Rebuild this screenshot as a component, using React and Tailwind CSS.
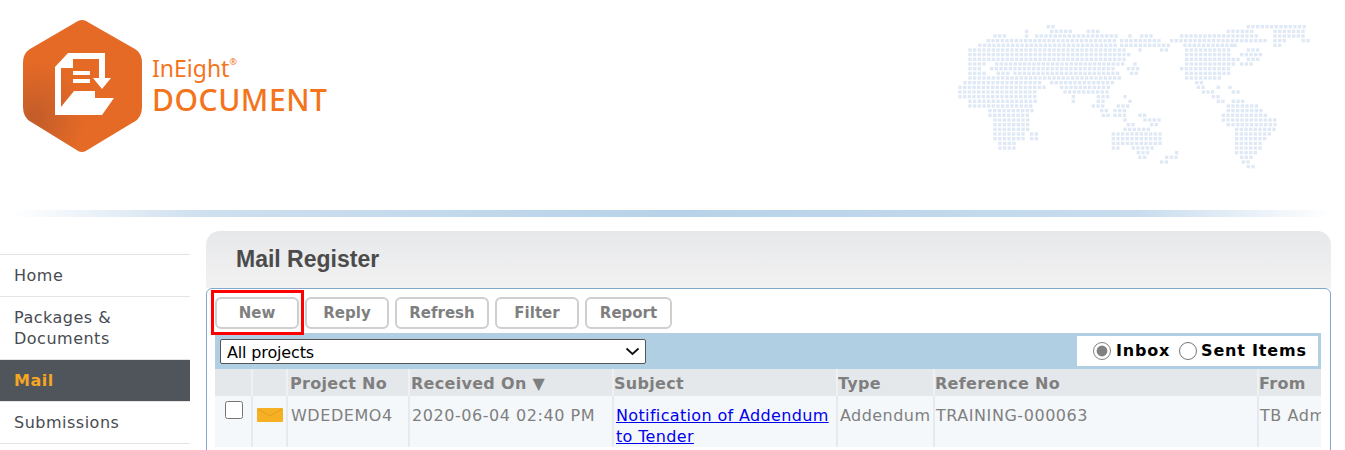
import React from 'react';

const verdana = { fontFamily: '"DejaVu Sans", Verdana, sans-serif' };

// dotted world map, runs are [from, to] in a 1335x690 space
const mapRows = [
  [75, [[440, 460], [1040, 1220]]],
  [89, [[375, 385], [450, 510], [560, 590], [980, 1060], [1120, 1205]]],
  [103, [[280, 320], [375, 385], [405, 650], [685, 695], [720, 755], [840, 1070], [1120, 1205]]],
  [117, [[260, 650], [660, 780], [810, 1090], [1120, 1155], [1205, 1220]]],
  [131, [[235, 650], [660, 800], [850, 990], [1000, 1010], [1120, 1140]]],
  [145, [[205, 680], [715, 725], [780, 800], [855, 990], [1040, 1080]]],
  [159, [[205, 690], [855, 990], [1020, 1080]]],
  [173, [[205, 680], [855, 1020], [1040, 1070]]],
  [187, [[205, 260], [285, 670], [700, 710], [855, 1000], [1020, 1060]]],
  [201, [[205, 240], [270, 640], [680, 710], [840, 990]]],
  [215, [[205, 250], [290, 320], [340, 660], [690, 710], [855, 990]]],
  [229, [[205, 660], [855, 955]]],
  [243, [[190, 420], [450, 640], [885, 910]]],
  [257, [[175, 440], [480, 630], [890, 910], [950, 960], [985, 995]]],
  [271, [[175, 410], [490, 620], [905, 940], [995, 1020]]],
  [285, [[175, 400], [515, 525], [590, 630], [670, 680], [935, 960]]],
  [299, [[205, 410], [515, 525], [590, 615], [685, 695], [950, 975], [995, 1035]]],
  [313, [[205, 395], [575, 615], [650, 680], [980, 1065]]],
  [327, [[265, 395], [600, 615], [640, 680], [980, 1080]]],
  [341, [[265, 390], [605, 630], [640, 680], [715, 740], [965, 1100]]],
  [355, [[280, 380], [670, 680], [730, 785], [965, 1130]]],
  [369, [[280, 390], [680, 700], [750, 770], [980, 1130]]],
  [383, [[280, 385], [670, 750], [1005, 1130]]],
  [397, [[280, 370], [390, 415], [635, 775], [1005, 1115]]],
  [411, [[280, 370], [390, 415], [635, 775], [1005, 1100]]],
  [425, [[295, 350], [635, 775], [1005, 1085]]],
  [439, [[295, 340], [635, 660], [695, 760], [1005, 1075]]],
  [453, [[710, 745], [825, 835], [1005, 1065]]],
  [467, [[715, 730], [795, 825], [1020, 1050]]],
  [481, [[780, 800], [1025, 1050]]],
  [495, [[1040, 1065]]],
];

const WorldMap = () => {
  const dots = [];
  mapRows.forEach(([y, runs]) => {
    runs.forEach(([from, to]) => {
      for (let x = from; x <= to; x += 14) {
        dots.push(<rect key={`${x}-${y}`} x={x} y={y} width="10" height="10" fill="#dfe9f5" />);
      }
    });
  });
  return (
    <svg width="445" height="210" viewBox="0 0 1335 630" className="flex-shrink-0">
      <defs>
        <filter id="soft"><feGaussianBlur stdDeviation="1.8" /></filter>
      </defs>
      <g filter="url(#soft)">{dots}</g>
    </svg>
  );
};

const Logo = () => (
  <div className="flex items-center">
    <svg width="124" height="136" viewBox="0 0 124 136" className="flex-shrink-0">
      <defs>
        <radialGradient id="hex" cx="0.03" cy="0.78" r="0.5">
          <stop offset="0" stopColor="#c25c2a" />
          <stop offset="1" stopColor="#e56a26" />
        </radialGradient>
      </defs>
      <path
        d="M62 11 L111 39 Q114 41 114 46 V90 Q114 96 110 98 L62 127 L15 98 Q11 96 11 90 V46 Q11 41 14 39 Z"
        fill="url(#hex)"
        stroke="url(#hex)"
        strokeWidth="16"
        strokeLinejoin="round"
      />
      {/* document, arrow and folder */}
      <g transform="translate(-20 -17)" fill="#fff">
        <path d="M55 115 V67 L68 53 H105 V78 H111 L102 89 L93 78 H99 V59 H73 V68 H61 V107 L74 91 H95 V98 H114 L102 115 Z" />
        <rect x="73" y="71" width="17" height="4" />
        <rect x="73" y="79" width="17" height="4" />
      </g>
    </svg>
    <div className="ml-[8px] text-[#f4741c]" style={{ fontFamily: '"Noto Sans", sans-serif' }}>
      <div className="flex h-[29px] items-start text-[23px] leading-[28px]">
        InEight<span className="text-[9px] leading-[16px]">®</span>
      </div>
      <div className="text-[30px] font-medium leading-[34px] tracking-[0.55px]">DOCUMENT</div>
    </div>
  </div>
);

const NavItem = ({ children, active }) => (
  <div
    className={`border-b border-[#e4e4e4] px-[14px] py-[10px] text-[16px] leading-[21px] tracking-[0.5px] ${
      active ? 'bg-[#50545b] font-bold tracking-[0.2px] text-[#f5a623]' : 'text-[#474b52]'
    }`}
  >
    {children}
  </div>
);

const ToolButton = ({ children, width }) => (
  <button
    className={`h-[32px] rounded-[6px] border-2 border-[#cfcfcf] bg-white text-[15px] font-bold text-[#7f7f7f] ${width}`}
  >
    {children}
  </button>
);

const headCell = 'border-r-2 border-[#eef0f2] pt-[3px] text-left text-[16px] font-bold tracking-[0.3px] text-[#7f7f7f] whitespace-nowrap overflow-hidden';
const bodyCell = 'border-r-2 border-[#e6eaee] pt-[9px] align-top text-[16px] leading-[21px] tracking-[0.55px] text-[#7f7f7f] whitespace-nowrap overflow-hidden';

const App = () => {
  return (
    <div className="h-[450px] w-[1345px] overflow-hidden bg-white" style={verdana}>
      {/* Header */}
      <div className="flex h-[210px] items-start justify-between pl-[20px] pt-[17px]">
        <Logo />
        <div className="mt-[-17px]">
          <WorldMap />
        </div>
      </div>
      <div className="mx-[12px] h-[7px] bg-[linear-gradient(to_right,transparent,#cfe0ef_14%,#b7d2e8_50%,#c8dcee_85%,transparent)]" />

      <div className="flex pt-[14px]">
        {/* Sidebar */}
        <div className="w-[190px] flex-shrink-0 pt-[23px]">
          <div className="border-t border-[#e4e4e4]">
            <NavItem>Home</NavItem>
            <NavItem>Packages &amp; Documents</NavItem>
            <NavItem active>Mail</NavItem>
            <NavItem>Submissions</NavItem>
          </div>
        </div>

        {/* Main panel */}
        <div className="ml-[16px] w-[1125px]">
          <div
            className="h-[57px] rounded-t-[14px] bg-gradient-to-b from-[#e7e8ea] to-[#f2f2f2] pl-[30px] pt-[13px] text-[23px] font-bold leading-[30px] text-[#4b4b4b]"
            style={{ fontFamily: '"Liberation Sans", Arial, sans-serif' }}
          >
            Mail Register
          </div>
          <div className="relative h-[200px] rounded-[6px] border border-[#7fa8cb] bg-white pl-[8px] pr-[9px] pt-[8px]">
            {/* Toolbar */}
            <div className="flex gap-[6px]">
              <ToolButton width="w-[84px]">New</ToolButton>
              <ToolButton width="w-[84px]">Reply</ToolButton>
              <ToolButton width="w-[94px]">Refresh</ToolButton>
              <ToolButton width="w-[84px]">Filter</ToolButton>
              <ToolButton width="w-[87px]">Report</ToolButton>
            </div>
            <div className="absolute left-[4px] top-[1px] h-[45px] w-[93px] border-[3px] border-[#ff0000]" />

            {/* Filter strip */}
            <div className="mt-[4px] flex h-[36px] items-center justify-between bg-[#b0cfe3] pl-[5px] pr-[3px]">
              <div className="relative">
                <select className="block h-[25px] w-[426px] appearance-none rounded-[2px] border border-[#555] bg-white pl-[6px] pt-[1px] text-[16px] tracking-[-0.15px] text-black">
                  <option>All projects</option>
                </select>
                <svg width="15" height="9" viewBox="0 0 15 9" className="pointer-events-none absolute right-[6px] top-[8px]">
                  <path d="M1.5 1.5 L7.5 7 L13.5 1.5" fill="none" stroke="#111" strokeWidth="1.8" />
                </svg>
              </div>
              <div className="flex h-[30px] w-[241px] items-center bg-white pl-[16px] text-[16px] font-bold tracking-[0.8px] text-black">
                <input type="radio" name="box" defaultChecked className="mr-[5px] h-[18px] w-[18px] accent-[#808080]" />
                <span>Inbox</span>
                <input type="radio" name="box" className="ml-[9px] mr-[4px] h-[18px] w-[18px]" />
                <span>Sent Items</span>
              </div>
            </div>

            {/* Table */}
            <table className="w-[1106px] table-fixed border-collapse">
              <colgroup>
                <col className="w-[37px]" />
                <col className="w-[35px]" />
                <col className="w-[122px]" />
                <col className="w-[204px]" />
                <col className="w-[224px]" />
                <col className="w-[97px]" />
                <col className="w-[324px]" />
                <col className="w-[63px]" />
              </colgroup>
              <thead>
                <tr className="h-[27px] bg-[#e5e8eb]">
                  <th className={headCell}></th>
                  <th className={headCell}></th>
                  <th className={`${headCell} pl-[2px]`}>Project No</th>
                  <th className={`${headCell} pl-[1px]`}>Received On ▼</th>
                  <th className={headCell}>Subject</th>
                  <th className={headCell}>Type</th>
                  <th className={headCell}>Reference No</th>
                  <th className="pt-[3px] text-left text-[16px] font-bold tracking-[0.3px] text-[#7f7f7f]">From</th>
                </tr>
              </thead>
              <tbody>
                <tr className="bg-[#f4f8fb]">
                  <td className="border-r-2 border-[#e6eaee] pl-[10px] pt-[5px] align-top">
                    <input type="checkbox" className="block h-[18px] w-[18px] accent-[#808080]" />
                  </td>
                  <td className="border-r-2 border-[#e6eaee] pl-[4px] pt-[12px] align-top">
                    <svg width="26" height="14" viewBox="0 0 26 14" className="block">
                      <rect width="26" height="14" rx="1" fill="#f5b024" />
                      <path d="M1 1 L13 8 L25 1" fill="none" stroke="#e59f20" strokeWidth="1" />
                    </svg>
                  </td>
                  <td className={`${bodyCell} pl-[3px]`}>WDEDEMO4</td>
                  <td className={`${bodyCell} pl-[2px]`}>2020-06-04 02:40 PM</td>
                  <td className={`${bodyCell} pl-[2px] !whitespace-normal !tracking-[0.35px]`}>
                    <a href="#" className="text-[#0000ee] underline">Notification of Addendum to Tender</a>
                  </td>
                  <td className={`${bodyCell} pl-[2px] !tracking-[0.45px]`}>Addendum</td>
                  <td className={`${bodyCell} pl-[1px]`}>TRAINING-000063</td>
                  <td className="overflow-hidden whitespace-nowrap pl-[1px] pt-[9px] align-top text-[16px] leading-[21px] tracking-[0.55px] text-[#7f7f7f]">TB Admin</td>
                </tr>
              </tbody>
            </table>
          </div>
        </div>
      </div>
    </div>
  );
};

export default App;
